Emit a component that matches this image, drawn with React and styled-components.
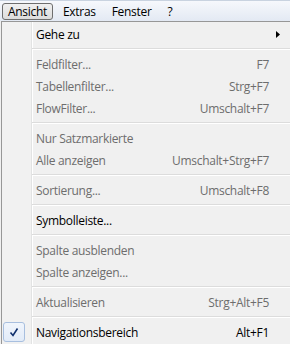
import React from "react";
import styled, { createGlobalStyle } from "styled-components";

const Global = createGlobalStyle`
  html, body { margin: 0; padding: 0; background: #f0f0f0; overflow: hidden; }
  #root { width: 290px; height: 344px; overflow: hidden; }
`;

const Frame = styled.div`
  width: 290px;
  height: 344px;
  overflow: hidden;
  font-family: "Open Sans", "Noto Sans", sans-serif;
  font-size: 12px;
  letter-spacing: -0.3px;
  background: #f0f0f0;
`;

const MenuBar = styled.div`
  height: 21px;
  box-sizing: border-box;
  display: flex;
  align-items: center;
  padding-left: 2px;
  gap: 4px;
  border-top: 1px solid #c9d3e0;
  background: linear-gradient(#f6f8fc, #e3e9f3);
`;

const BarItem = styled.div`
  height: 17px;
  box-sizing: border-box;
  display: flex;
  align-items: center;
  padding: 0 5px;
  border: 1px solid ${(p) => (p.$open ? "#6e6e6e" : "transparent")};
  border-radius: 3px;
  background: ${(p) => (p.$open ? "linear-gradient(#f0f0f0, #dcdcdc)" : "transparent")};
  color: #000;
  line-height: 15px;
`;

const Menu = styled.div`
  width: 296px;
  margin-left: 1px;
  box-sizing: border-box;
  border: 1px solid #979797;
  padding: 1px 0;
  background: linear-gradient(
    to right,
    #f1f1f1 0 29px,
    #e2e3e3 29px 30px,
    #ffffff 30px 31px,
    #f0f0f0 31px
  );
`;

const Row = styled.div`
  height: 22px;
  display: grid;
  grid-template-columns: 30px 1fr auto 27px;
  align-items: center;
  color: ${(p) => (p.$disabled ? "#6d6d6d" : "#000")};
`;

const CheckCell = styled.div`
  height: 22px;
  display: flex;
  align-items: center;
  padding-left: 1px;
`;

const CheckBox = styled.div`
  width: 22px;
  height: 20px;
  box-sizing: border-box;
  border: 1px solid #a8bfdf;
  border-radius: 3px;
  background: linear-gradient(#f0f5fc, #e2ebf8);
  display: flex;
  align-items: center;
  justify-content: center;
`;

const Label = styled.span`
  padding-left: 4px;
  white-space: nowrap;
`;

const Shortcut = styled.span`
  white-space: nowrap;
  text-align: right;
`;

const ArrowCell = styled.div`
  display: flex;
  align-items: center;
  padding-left: 7px;
`;

const Separator = styled.div`
  height: 8px;
  margin-left: 30px;
  display: flex;
  flex-direction: column;
  justify-content: center;
  &::before {
    content: "";
    display: block;
    height: 1px;
    background: #dcdcdc;
  }
  &::after {
    content: "";
    display: block;
    height: 1px;
    background: #ffffff;
  }
`;

const Arrow = () => (
  <svg width="4" height="7" viewBox="0 0 4 7">
    <path d="M0 0 L4 3.5 L0 7 Z" fill="#000" />
  </svg>
);

const Check = () => (
  <svg width="10" height="10" viewBox="0 0 10 10">
    <path d="M1.5 5.5 L4 8.5 L8.5 1.5" fill="none" stroke="#10306e" strokeWidth="1.6" />
  </svg>
);

const items = [
  { label: "Gehe zu", sub: true },
  "sep",
  { label: "Feldfilter...", key: "F7", dis: true },
  { label: "Tabellenfilter...", key: "Strg+F7", dis: true },
  { label: "FlowFilter...", key: "Umschalt+F7", dis: true },
  "sep",
  { label: "Nur Satzmarkierte", dis: true },
  { label: "Alle anzeigen", key: "Umschalt+Strg+F7", dis: true },
  "sep",
  { label: "Sortierung...", key: "Umschalt+F8", dis: true },
  "sep",
  { label: "Symbolleiste..." },
  "sep",
  { label: "Spalte ausblenden", dis: true },
  { label: "Spalte anzeigen...", dis: true },
  "sep",
  { label: "Aktualisieren", key: "Strg+Alt+F5", dis: true },
  "sep",
  { label: "Navigationsbereich", key: "Alt+F1", checked: true },
];

export default function App() {
  return (
    <Frame>
      <Global />
      <MenuBar>
        <BarItem $open>Ansicht</BarItem>
        <BarItem>Extras</BarItem>
        <BarItem>Fenster</BarItem>
        <BarItem>?</BarItem>
      </MenuBar>
      <Menu>
        {items.map((it, i) =>
          it === "sep" ? (
            <Separator key={i} />
          ) : (
            <Row key={i} $disabled={it.dis}>
              <CheckCell>
                {it.checked && (
                  <CheckBox>
                    <Check />
                  </CheckBox>
                )}
              </CheckCell>
              <Label>{it.label}</Label>
              <Shortcut>{it.key || ""}</Shortcut>
              <ArrowCell>{it.sub && <Arrow />}</ArrowCell>
            </Row>
          )
        )}
      </Menu>
    </Frame>
  );
}
